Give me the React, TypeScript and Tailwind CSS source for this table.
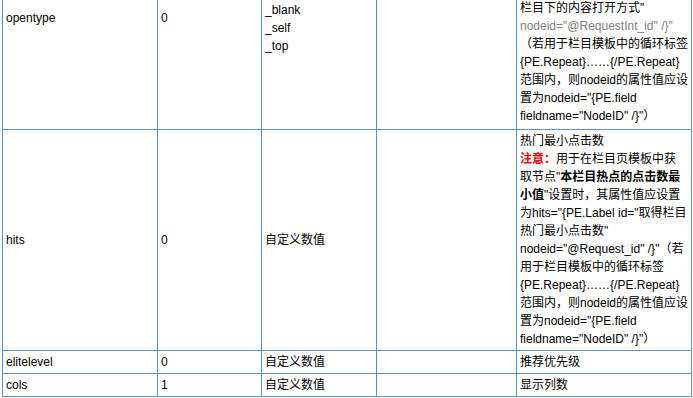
import React from "react";

const cell = "border-r border-[#6092be] px-[3px] overflow-hidden whitespace-nowrap";

function Row({
  h,
  align,
  cells,
}: {
  h: string;
  align: string;
  cells: React.ReactNode[];
}) {
  return (
    <div className={`grid grid-cols-[155px_104px_115px_140px_175px] border-b border-[#6092be] ${h}`}>
      {cells.map((c, i) => (
        <div key={i} className={`${cell} flex ${align}`}>
          {c}
        </div>
      ))}
    </div>
  );
}

export default function App() {
  return (
    <div className="w-[693px] h-[398px] overflow-hidden bg-white text-black text-[12px] leading-[18px] font-['Liberation_Sans','Noto_Sans_CJK_SC',sans-serif]">
      <div className="ml-[2px] w-[690px] border-l border-[#6092be]">
        {/* opentype row (top cropped) */}
        <Row
          h="h-[130px]"
          align="items-start"
          cells={[
            <div className="pt-[9px]">opentype</div>,
            <div className="pt-[9px]">0</div>,
            <div className="pt-[1px]">
              _blank
              <br />
              _self
              <br />
              _top
            </div>,
            <div />,
            <div className="-mt-[1px]">
              {'栏目下的内容打开方式"'}
              <br />
              <span className="text-[#808080]">{'nodeid="@RequestInt_id" /}"'}</span>
              <br />
              {"（若用于栏目模板中的循环标签"}
              <br />
              {"{PE.Repeat}……{/PE.Repeat}"}
              <br />
              {"范围内，则nodeid的属性值应设"}
              <br />
              {'置为nodeid="{PE.field'}
              <br />
              {'fieldname="NodeID" /}"）'}
            </div>,
          ]}
        />
        {/* hits row */}
        <Row
          h="h-[221px]"
          align="items-center"
          cells={[
            <div>hits</div>,
            <div>0</div>,
            <div>自定义数值</div>,
            <div />,
            <div>
              {"热门最小点击数"}
              <br />
              <span className="text-[#ff0000] font-bold">注意：</span>
              {"用于在栏目页模板中获"}
              <br />
              {'取节点"'}
              <span className="font-bold">本栏目热点的点击数最</span>
              <br />
              <span className="font-bold">小值</span>
              {'"设置时，其属性值应设置'}
              <br />
              {'为hits="{PE.Label id="取得栏目'}
              <br />
              {'热门最小点击数"'}
              <br />
              {'nodeid="@Request_id" /}"（若'}
              <br />
              {"用于栏目模板中的循环标签"}
              <br />
              {"{PE.Repeat}……{/PE.Repeat}"}
              <br />
              {"范围内，则nodeid的属性值应设"}
              <br />
              {'置为nodeid="{PE.field'}
              <br />
              {'fieldname="NodeID" /}"）'}
            </div>,
          ]}
        />
        <Row
          h="h-[23px]"
          align="items-center"
          cells={[
            <div>elitelevel</div>,
            <div>0</div>,
            <div>自定义数值</div>,
            <div />,
            <div>推荐优先级</div>,
          ]}
        />
        <Row
          h="h-[23px]"
          align="items-center"
          cells={[
            <div>cols</div>,
            <div>1</div>,
            <div>自定义数值</div>,
            <div />,
            <div>显示列数</div>,
          ]}
        />
      </div>
    </div>
  );
}
